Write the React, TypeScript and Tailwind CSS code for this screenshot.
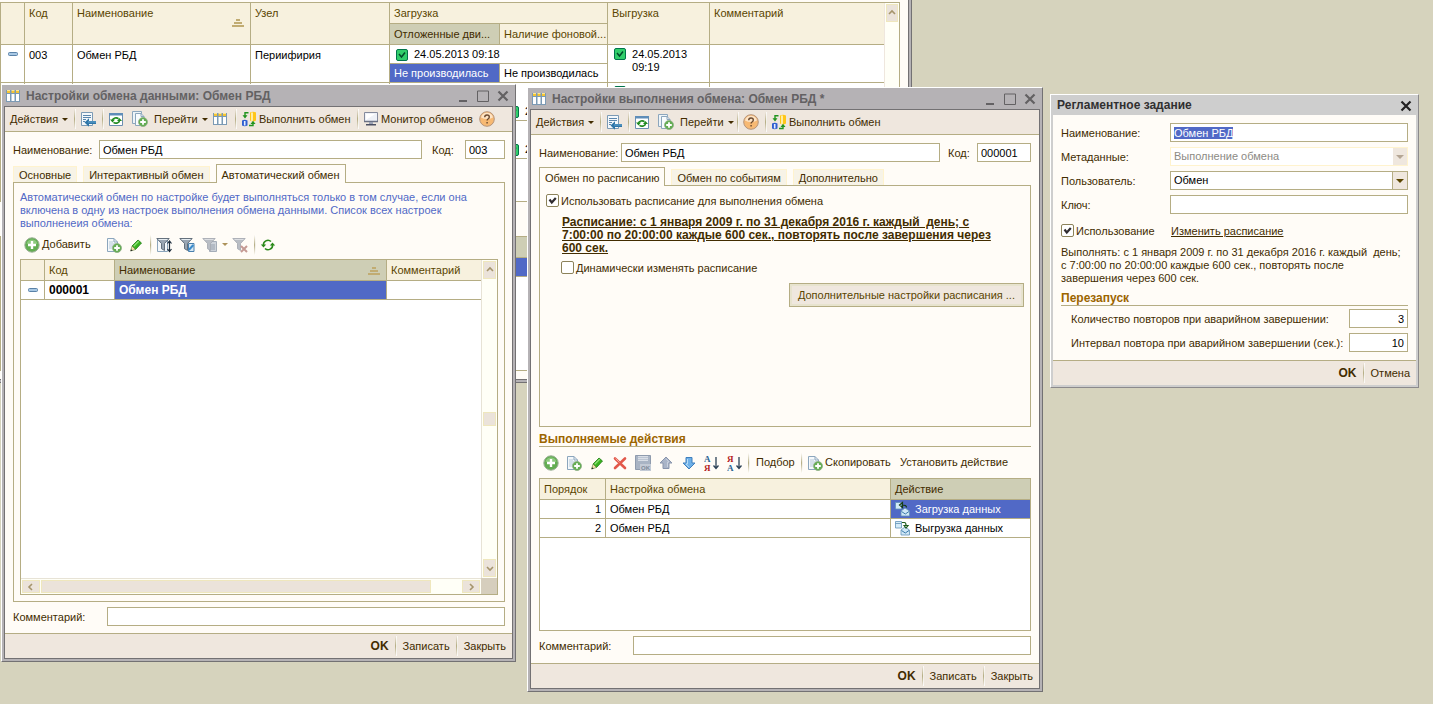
import { useEffect, useRef, type ReactNode } from 'react';
import clsx from 'clsx';

type IconProps = { className?: string };

/* ---------- icons ---------- */

function TableIcon({ className }: IconProps) {
  return (
    <svg viewBox="0 0 14 14" className={clsx('h-3.5 w-3.5 shrink-0', className)}>
      <path d="M0 1h14v12H0z" fill="#7b9ab5" />
      <path d="M1 5h3v7H1zM5.500 5h3v7h-3zM10 5h3v7h-3z" fill="#fff" />
      <path d="M1 2h3v2H1zM5.500 2h3v2h-3zM10 2h3v2h-3z" fill="#f7c531" />
      <path d="M1 1h3v1H1zM5.500 1h3v1h-3zM10 1h3v1h-3z" fill="#ffe794" />
    </svg>
  );
}

function FormArrowIcon() {
  return (
    <svg viewBox="0 0 16 16" className="h-4 w-4 shrink-0">
      <path d="M1.500 1.500h11v13h-11z" fill="#f4f8fb" stroke="#7b9ab5" />
      <path d="M3 4.500h8M3 6.500h8M3 8.500h3M3 10.500h2" stroke="#5a86ad" />
      <path d="M4.500 11.500l4.500-4.200v2.700H16v3H9v2.700z" fill="#2f76a8" />
      <path d="M8 11h8" stroke="#73b2da" strokeWidth=".8" />
    </svg>
  );
}

function ReloadIcon() {
  return (
    <svg viewBox="0 0 16 16" className="h-4 w-4 shrink-0">
      <path d="M1.500 2.500h13v12h-13z" fill="#fff" stroke="#6b8eb0" />
      <path d="M1 2h14v2.500H1z" fill="#5f8db8" />
      <path d="M4.500 9a3.500 2.600 0 0 1 6-1.300M11.500 9.500a3.500 2.600 0 0 1-6 1.800" fill="none" stroke="#1f8a1f" strokeWidth="1.600" />
      <path d="M2 8.500h5L4.500 11.500zM9 10h5l-2.500-3z" fill="#1f8a1f" />
    </svg>
  );
}

function PlusBadge() {
  return (
    <>
      <circle cx="11" cy="11" r="4.500" fill="#63ad52" stroke="#8fae86" strokeWidth=".8" />
      <path d="M11 8.200v5.600M8.200 11h5.600" stroke="#fff" strokeWidth="1.800" />
    </>
  );
}

function CopyIcon() {
  return (
    <svg viewBox="0 0 16 16" className="h-4 w-4 shrink-0">
      <path d="M.5.500h9v12h-9z" fill="#eef4f8" stroke="#8ca6bd" />
      <path d="M3.500 2.500H9l3 3v9H3.500z" fill="#f8fbfd" stroke="#8ca6bd" />
      <path d="M9 2.500v3h3" fill="none" stroke="#8ca6bd" />
      <PlusBadge />
    </svg>
  );
}

function PageAddIcon() {
  return (
    <svg viewBox="0 0 16 16" className="h-4 w-4 shrink-0">
      <path d="M1.500 1.500H8l3.500 3.500v9.500h-10z" fill="#f4f8fb" stroke="#8ca6bd" />
      <path d="M8 1.500V5h3.500" fill="none" stroke="#8ca6bd" />
      <path d="M3 5h4M3 7h6M3 9h4M3 11h3" stroke="#b5c8d8" />
      <PlusBadge />
    </svg>
  );
}

function ExchangeIcon() {
  return (
    <svg viewBox="0 0 16 16" className="h-4 w-4 shrink-0">
      <path d="M9 1.500q3-1.500 6 0v8q-3 1.800-6 0z" fill="#ffc618" />
      <path d="M11 1.500v8.500" stroke="#fff7c6" strokeWidth="1.600" />
      <path d="M1 9.500q2.700-1.500 5.500 0v5q-2.800 1.500-5.500 0z" fill="#2f5fd0" />
      <path d="M3.700 10v4.500" stroke="#e4edff" strokeWidth="1.600" />
      <path d="M7.500 1.700H4V5M8 14.500h4V12" fill="none" stroke="#21941f" strokeWidth="1.400" />
      <path d="M1.500 4.200h5L4 7.500zM9.500 13h5L12 9.800z" fill="#21941f" />
    </svg>
  );
}

function MonitorIcon() {
  return (
    <svg viewBox="0 0 16 16" className="h-4 w-4 shrink-0">
      <path d="M1.500 1.500h13v9h-13z" fill="#eef1f7" stroke="#848a9c" />
      <path d="M3 9l9-6H3z" fill="#fff" />
      <path d="M1 10.500h14" stroke="#6b7184" strokeWidth="1.500" />
      <path d="M6 11h4v2H6z" fill="#9ca2b5" />
      <path d="M3 13h10v1.500H3z" fill="#4a4f63" />
    </svg>
  );
}

function HelpIcon() {
  return (
    <svg viewBox="0 0 16 16" className="h-4 w-4 shrink-0">
      <circle cx="8" cy="8" r="7.300" fill="#f7b973" stroke="#b5947b" />
      <path d="M2 6.500a6.200 6.200 0 0 1 12 0q-6 3-12 0" fill="#fde3c4" />
      <path d="M5.700 6.200Q5.700 4 8 4t2.300 2q0 1.200-1.300 2-.9.600-.9 1.500M8.100 11v1.500" fill="none" stroke="#6b4a31" strokeWidth="1.400" />
    </svg>
  );
}

function AddIcon() {
  return (
    <svg viewBox="0 0 16 16" className="h-4 w-4 shrink-0">
      <circle cx="8" cy="8" r="7.200" fill="#63ad52" stroke="#9aaf95" />
      <path d="M2.500 6.500a5.800 5.800 0 0 1 11 0q-5 2.500-11 0" fill="#8cc97d" />
      <path d="M8 4v8M4 8h8" stroke="#fff" strokeWidth="2.400" />
    </svg>
  );
}

function PencilIcon() {
  return (
    <svg viewBox="0 0 16 16" className="h-4 w-4 shrink-0">
      <path d="M4 9L10 3l3.500 3L7.500 12.500z" fill="#39b21f" stroke="#1c7a10" strokeWidth=".8" />
      <path d="M4 9l3.500 3.500L2.700 14z" fill="#f7e3ad" stroke="#5a7a3c" strokeWidth=".6" />
      <path d="M2.500 14.200l.5-2L4.700 13.600z" fill="#222" />
      <path d="M5.700 9.200l5-4.900" stroke="#8fe27a" strokeWidth="1.200" />
    </svg>
  );
}

function FunnelIcon({ kind }: { kind: 'sort' | 'value' | 'list' | 'clear' }) {
  const dim = kind === 'list' || kind === 'clear';
  return (
    <svg viewBox="0 0 16 16" className="h-4 w-4 shrink-0">
      {kind === 'sort' && <path d="M1.500 2.500h10v12h-10z" fill="#f4f8fb" stroke="#8ca6bd" />}
      {kind === 'list' && (
        <>
          <path d="M7.500 4.500h7v10h-7z" fill="#ced3da" stroke="#a5adb8" />
          <path d="M9 8h4M9 10h4M9 12h4" stroke="#98a1ae" />
        </>
      )}
      <path d="M.8 1.500h12.400L8.500 6.500v7L5.500 11.700V6.500z" fill={dim ? '#b9bdc4' : '#9aa6b3'} stroke={dim ? '#a2a6ae' : '#4a5866'} strokeWidth=".8" />
      <path d="M2.500 2.500h9" stroke={dim ? '#dcdee2' : '#e6edf2'} />
      {kind === 'sort' && <path d="M13.500 4v10M11.500 6.500l2-2.500 2 2.500M11.500 12l2 2.500 2-2.500" fill="none" stroke="#1c2c3c" strokeWidth="1.200" />}
      {kind === 'value' && (
        <>
          <path d="M9.500 6.500h5.500v8H9.500z" fill="#d8e9f5" stroke="#4a80ad" />
          <path d="M9.800 13l4.500-5" stroke="#3a8acb" strokeWidth="2" />
        </>
      )}
      {kind === 'clear' && <path d="M9 9l6 6M15 9l-6 6" stroke="#c59a94" strokeWidth="2" />}
    </svg>
  );
}

function RefreshIcon() {
  return (
    <svg viewBox="0 0 16 16" className="h-4 w-4 shrink-0">
      <path d="M3.500 8.500a4.500 4.500 0 0 1 7.500-4M12.500 7.500a4.500 4.500 0 0 1-7.500 4" fill="none" stroke="#2a8a1a" strokeWidth="1.600" />
      <path d="M.8 7.500h5.400L3.500 10.500zM9.800 8.500h5.400l-2.700-3z" fill="#2a8a1a" />
    </svg>
  );
}

function DeleteIcon() {
  return (
    <svg viewBox="0 0 16 16" className="h-4 w-4 shrink-0">
      <path d="M3 3.500l10 9.500M13 3.500L3 13" stroke="#e2584a" strokeWidth="2.600" strokeLinecap="round" />
      <path d="M3.500 3.500l4 4" stroke="#f6a49a" />
    </svg>
  );
}

function SaveIcon() {
  return (
    <svg viewBox="0 0 16 16" className="h-4 w-4 shrink-0">
      <path d="M.5.500h15v14H.5z" fill="#a9b4c4" stroke="#8f9bad" />
      <path d="M3 1h10v5H3z" fill="#d9dee6" />
      <path d="M3 2.500h10M3 4.500h10" stroke="#bcc5d2" />
      <path d="M5 9h11v7H5z" fill="#c3cad5" />
      <text x="6" y="15" fontSize="6" fontWeight="bold" fontFamily="Liberation Sans, sans-serif" fill="#7f8a9b">OK</text>
    </svg>
  );
}

function MoveIcon({ down }: { down?: boolean }) {
  return (
    <svg viewBox="0 0 16 16" className={clsx('h-4 w-4 shrink-0', down && 'rotate-180')}>
      <path d="M8 2l6 6h-3v5.500H5V8H2z" fill={down ? '#6fb0e8' : '#a9b4c8'} stroke={down ? '#3f7fbd' : '#8995ad'} strokeLinejoin="round" />
      <path d="M8 3.800L11 7H9.500v5" fill="none" stroke={down ? '#b5dcf8' : '#c8d0de'} />
    </svg>
  );
}

function OrderIcon({ desc }: { desc?: boolean }) {
  return (
    <svg viewBox="0 0 16 16" className="h-4 w-4 shrink-0">
      <text x="0" y="7" fontSize="9" fontWeight="bold" fontFamily="Liberation Serif, serif" fill={desc ? '#b51f1f' : '#2a6594'}>{desc ? 'Я' : 'А'}</text>
      <text x="0" y="15.500" fontSize="9" fontWeight="bold" fontFamily="Liberation Serif, serif" fill={desc ? '#2a6594' : '#b51f1f'}>{desc ? 'А' : 'Я'}</text>
      <path d="M12 2v11M9.500 10.500l2.500 3 2.500-3" fill="none" stroke="#2c4257" strokeWidth="1.300" />
    </svg>
  );
}

function TransferIcon({ out }: { out?: boolean }) {
  return (
    <svg viewBox="0 0 16 16" className="h-4 w-4 shrink-0">
      <path d="M.5 1.500h6v6.500h-6z" fill="#d4ebf8" stroke="#5f92b8" strokeWidth=".8" />
      {out && <path d="M.5 3.500h6" stroke="#5f92b8" strokeWidth=".8" />}
      <path d="M6 10l4-3 4.500 3v5H6z" fill="#cfe7f6" stroke="#5f92b8" strokeWidth=".8" />
      <path d="M6.500 10.500l3.800 2.500 3.700-2.500" fill="none" stroke="#3b7bab" />
      {out ? (
        <path d="M7 2.500h2.500q1.500 0 1.500 3M9 5.500l2 2.500 2-2.500z" fill="none" stroke="#1d5c1d" strokeWidth="1.200" />
      ) : (
        <path d="M11.500 6.500Q11.500 4 7 4M7.500 1.500L4.500 4l3 2.500z" fill="none" stroke="#163c16" strokeWidth="1.200" />
      )}
    </svg>
  );
}

function OkBox({ className }: IconProps) {
  return (
    <svg viewBox="0 0 12 12" className={clsx('h-3 w-3 shrink-0', className)}>
      <rect x=".5" y=".5" width="11" height="11" rx="1.500" fill="#31ce6b" stroke="#00734a" />
      <path d="M3 5l2.500 3L9 3.500" fill="none" stroke="#004a29" strokeWidth="1.500" />
    </svg>
  );
}

function RowMark() {
  return (
    <svg viewBox="0 0 10 4" className="mx-auto h-1 w-2.5">
      <rect x=".5" y=".5" width="9" height="3" rx="1" fill="#a8c8e4" stroke="#5a82a8" />
    </svg>
  );
}

function SortMark() {
  return (
    <svg viewBox="0 0 12 8" className="h-2 w-3 shrink-0">
      <path d="M4 0h4v2H4zM2 3h8v2H2zM0 6h12v2H0z" fill="#c1ac72" />
    </svg>
  );
}

function Caret({ wide }: { wide?: boolean }) {
  return (
    <svg viewBox="0 0 6 3" className={clsx('shrink-0', wide ? 'h-1 w-2' : 'h-[3px] w-1.5')}>
      <path d="M0 0h6L3 3z" fill="currentColor" />
    </svg>
  );
}

function CrossIcon({ color }: { color: string }) {
  return (
    <svg viewBox="0 0 12 12">
      <path d="M1.500 1.500l9 9M10.500 1.500l-9 9" stroke={color} strokeWidth="2.200" />
    </svg>
  );
}

/* ---------- shared controls ---------- */

function Sep() {
  return <span className="h-5 w-0.5 shrink-0 border-r border-white/80 bg-gradient-to-b from-transparent via-[#b5ad84] to-transparent" />;
}

function ToolButton({ icon, children, menu, label, className }: { icon?: ReactNode; children?: ReactNode; menu?: boolean; label?: string; className?: string }) {
  return (
    <button type="button" aria-label={label} className={clsx('flex h-5 shrink-0 items-center gap-0.5 whitespace-nowrap', className)}>
      {icon}
      {children && <span>{children}</span>}
      {menu && <span className="pl-0.5"><Caret /></span>}
    </button>
  );
}

function TitleBar({ title }: { title: string }) {
  return (
    <div className="flex h-[21px] shrink-0 items-center gap-1.5 pl-0.5 pr-1 pt-px text-[12px] font-bold text-[#636163]">
      <TableIcon />
      <h2 className="flex-1 whitespace-nowrap">{title}</h2>
      <div className="flex items-center gap-2">
        <button type="button" aria-label="Свернуть" className="h-3 w-3">
          <svg viewBox="0 0 12 12"><path d="M2 10h8v2H2z" fill="#636163" /></svg>
        </button>
        <button type="button" aria-label="Развернуть" className="h-3 w-3">
          <svg viewBox="0 0 12 12"><path d="M.5 1h11v10.500H.5z" fill="none" stroke="#636163" /></svg>
        </button>
        <button type="button" aria-label="Закрыть" className="h-3 w-3">
          <CrossIcon color="#636163" />
        </button>
      </div>
    </div>
  );
}

function FooterBar({ actions }: { actions: string[] }) {
  return (
    <footer className="flex h-[25px] shrink-0 items-center justify-end gap-1.5 border-t border-[#b5ad84] bg-[#efe7de] px-1.5">
      {actions.map((a, i) => (
        <div key={a} className="flex items-center gap-1.5">
          {i > 0 && <Sep />}
          <button type="button" className={clsx(i === 0 && 'text-[12px] font-bold')}>{a}</button>
        </div>
      ))}
    </footer>
  );
}

const field = 'h-[19px] border border-[#b5ad84] bg-white px-[3px] text-black outline-none';
const caption = 'whitespace-nowrap pt-0.5';

function Tabs({ items, active }: { items: string[]; active: number }) {
  return (
    <div role="tablist" className="flex h-[18px] shrink-0 items-end gap-1.5">
      {items.map((t, i) => (
        <button
          key={t}
          type="button"
          role="tab"
          aria-selected={i === active}
          className={clsx(
            'whitespace-nowrap border-x border-t px-[5px]',
            i === active ? 'relative -mb-px h-[19px] border-[#b5ad84] bg-[#fffcf7] pt-0.5' : 'h-4 border-[#fff3ce] bg-[#f7f3e7] pt-px',
          )}
        >
          {t}
        </button>
      ))}
    </div>
  );
}

function CheckBox({ id, label, checked }: { id: string; label: string; checked?: boolean }) {
  return (
    <div className="flex items-center gap-0.5">
      <span className="relative flex">
        <input id={id} type="checkbox" defaultChecked={checked} className="peer h-[13px] w-[13px] appearance-none rounded-[2px] border border-[#8c825a] bg-white" />
        <svg viewBox="0 0 13 13" className="pointer-events-none absolute inset-0 hidden peer-checked:block">
          <path d="M3.500 5.500L5.800 8.500 9.800 4" fill="none" stroke="#302c30" strokeWidth="2.200" />
        </svg>
      </span>
      <label htmlFor={id} className={caption}>{label}</label>
    </div>
  );
}

const arrows = {
  up: 'M2 6l3-3 3 3',
  down: 'M2 4l3 3 3-3',
  left: 'M6 2L3 5l3 3',
  right: 'M4 2l3 3-3 3',
};

function ScrollButton({ dir, className }: { dir: keyof typeof arrows; className?: string }) {
  return (
    <button type="button" aria-label={dir} className={clsx('flex shrink-0 items-center justify-center border border-[#efe7bd] bg-[#ebe3da]', className)}>
      <svg viewBox="0 0 10 10" className="h-2.5 w-2.5">
        <path d={arrows[dir]} fill="none" stroke="#a5946b" strokeWidth="1.600" />
      </svg>
    </button>
  );
}

/* ---------- windows ---------- */

const thBase = 'border-b border-[#b5ad84] px-1 pb-[3px] pt-1 text-left align-top font-normal leading-[13px] whitespace-nowrap';
const th = clsx(thBase, 'border-r bg-[#f7f1de] text-[#5a4500]');
const thLast = clsx(thBase, 'bg-[#f7f1de] text-[#5a4500]');
const thActive = clsx(thBase, 'border-r bg-[#ceceb5] text-[#422c00]');
const thActiveLast = clsx(thBase, 'bg-[#ceceb5] text-[#422c00]');

const tdBase = 'border-b border-[#b5ad84] px-1 leading-[13px] whitespace-nowrap';
const td = clsx(tdBase, 'border-r align-top text-black');
const tdLast = clsx(tdBase, 'align-top text-black');
const tdActive = clsx(tdBase, 'border-r bg-[#5169c6] align-top text-white');
const tdActiveLast = clsx(tdBase, 'bg-[#5169c6] align-top text-white');

function JournalWindow() {
  return (
    <section className="absolute left-0 top-0 flex h-[383px] w-[912px] flex-col border-b border-r border-[#737173] bg-[#b5b2b5] pb-0.5 pr-0.5">
      <div className="flex flex-1 flex-col border-b border-r border-[#737173] bg-[#fffcf7] pb-2 pr-2 pt-0.5">
        <div className="flex h-[200px] shrink-0 border border-[#b5ad84] bg-white">
          <table className="w-[883px] table-fixed border-separate border-spacing-0 self-start">
            <colgroup>
              <col className="w-[24px]" />
              <col className="w-[48px]" />
              <col className="w-[178px]" />
              <col className="w-[139px]" />
              <col className="w-[110px]" />
              <col className="w-[108px]" />
              <col className="w-[102px]" />
              <col />
            </colgroup>
            <thead>
              <tr className="h-[21px]">
                <th rowSpan={2} className={th}></th>
                <th rowSpan={2} className={th}>Код</th>
                <th rowSpan={2} className={th}>
                  <span className="flex justify-between pr-0.5">
                    Наименование
                    <span className="pt-3"><SortMark /></span>
                  </span>
                </th>
                <th rowSpan={2} className={th}>Узел</th>
                <th colSpan={2} className={th}>Загрузка</th>
                <th rowSpan={2} className={th}>Выгрузка</th>
                <th rowSpan={2} className={thLast}>Комментарий</th>
              </tr>
              <tr className="h-[21px]">
                <th className={thActive}>Отложенные дви...</th>
                <th className={th}>Наличие фоновой...</th>
              </tr>
            </thead>
            <tbody>
              <tr className="h-[19px]">
                <td rowSpan={2} className={clsx(td, 'pt-[7px]')}><RowMark /></td>
                <td rowSpan={2} className={clsx(td, 'pt-1')}>003</td>
                <td rowSpan={2} className={clsx(td, 'pt-1')}>Обмен РБД</td>
                <td rowSpan={2} className={clsx(td, 'pt-1')}>Периифирия</td>
                <td colSpan={2} className={td}>
                  <span className="flex items-center gap-1.5 pl-0.5 pt-[3px]"><OkBox />24.05.2013 09:18</span>
                </td>
                <td rowSpan={2} className={td}>
                  <span className="flex gap-1.5 pl-0.5 pt-[3px]"><OkBox /><span>24.05.2013<br />09:19</span></span>
                </td>
                <td rowSpan={2} className={tdLast}></td>
              </tr>
              <tr className="h-[19px]">
                <td className={clsx(tdActive, 'pt-[3px]')}>Не производилась</td>
                <td className={clsx(td, 'pt-[3px]')}>Не производилась</td>
              </tr>
              {[0, 1].map((n) => (
                <tr key={n} className="h-[38px]">
                  <td className={td}></td>
                  <td className={td}></td>
                  <td className={td}></td>
                  <td className={td}></td>
                  <td className={tdLast}></td>
                  <td className={clsx(tdBase, 'border-r pb-0.5 align-bottom text-black')}>
                    <span className="flex items-center gap-1.5 pl-[3px]"><OkBox />24</span>
                  </td>
                  <td className={clsx(td, 'pl-1.5 pt-[3px]')}><OkBox /></td>
                  <td className={tdLast}></td>
                </tr>
              ))}
            </tbody>
          </table>
          <div className="flex flex-1 flex-col border-l border-[#efe7de] bg-[#fffff7] p-px">
            <ScrollButton dir="up" className="h-[18px] w-full" />
          </div>
        </div>
        {/* message list under the journal */}
        <div className="mt-[34px] flex flex-1 flex-col border border-[#b5ad84] bg-white">
          <div className="h-[21px] border-b border-[#b5ad84] bg-[#ceceb5]" />
          <div className="h-[19px] border-b border-[#b5ad84] bg-[#5169c6]" />
        </div>
      </div>
    </section>
  );
}

function SettingsWindow() {
  return (
    <section className="absolute left-[1px] top-[84px] flex h-[578px] w-[515px] flex-col border border-b-[#737173] border-l-white border-r-[#737173] border-t-white bg-[#b5b2b5] px-0.5 pb-0.5">
      <TitleBar title="Настройки обмена данными: Обмен РБД" />
      <div className="flex flex-1 flex-col border border-[#737173] bg-[#fffcf7]">
        <div className="flex h-[25px] shrink-0 items-center border-b border-[#b5ad84] bg-[#efe7de] pl-[5px]">
          <ToolButton menu className="w-[64px]">Действия</ToolButton>
          <Sep />
          <ToolButton label="Список" icon={<FormArrowIcon />} className="ml-1 w-[22px]" />
          <Sep />
          <ToolButton label="Перечитать" icon={<ReloadIcon />} className="ml-1 w-[24px]" />
          <ToolButton label="Скопировать" icon={<CopyIcon />} className="w-[22px]" />
          <ToolButton menu className="w-[59px]">Перейти</ToolButton>
          <ToolButton label="Таблица" icon={<TableIcon />} className="w-[22px]" />
          <Sep />
          <ToolButton icon={<ExchangeIcon />} className="ml-1 w-[116px]">Выполнить обмен</ToolButton>
          <Sep />
          <ToolButton icon={<MonitorIcon />} className="ml-1 w-[116px]">Монитор обменов</ToolButton>
          <ToolButton label="Справка" icon={<HelpIcon />} />
        </div>
        <div className="flex flex-1 flex-col pb-[7px] pl-2 pr-[7px] pt-2">
          <div className="flex items-center">
            <label htmlFor="set-name" className={clsx(caption, 'w-[86px]')}>Наименование:</label>
            <input id="set-name" defaultValue="Обмен РБД" className={clsx(field, 'min-w-0 flex-1')} />
            <label htmlFor="set-code" className={clsx(caption, 'w-[43px] pl-2.5')}>Код:</label>
            <input id="set-code" defaultValue="003" className={clsx(field, 'w-[40px]')} />
          </div>
          <div className="h-[5px]" />
          <Tabs items={['Основные', 'Интерактивный обмен', 'Автоматический обмен']} active={2} />
          <div className="flex flex-1 flex-col border border-[#b5ad84] px-1.5 pb-1.5 pt-2">
            <p className="whitespace-nowrap leading-[13px] text-[#5169c6]">
              Автоматический обмен по настройке будет выполняться только в том случае, если она<br />
              включена в одну из настроек выполнения обмена данными. Список всех настроек<br />
              выполненеия обмена:
            </p>
            <div className="flex h-[29px] items-center pl-1">
              <ToolButton icon={<AddIcon />} className="w-[82px]">Добавить</ToolButton>
              <ToolButton label="Добавить копированием" icon={<PageAddIcon />} className="w-[22px]" />
              <ToolButton label="Изменить" icon={<PencilIcon />} className="w-[22px]" />
              <Sep />
              <ToolButton label="Отбор и сортировка" icon={<FunnelIcon kind="sort" />} className="ml-1 w-[23px]" />
              <ToolButton label="Отбор по значению" icon={<FunnelIcon kind="value" />} className="w-[23px]" />
              <ToolButton label="История отборов" menu icon={<FunnelIcon kind="list" />} className="w-[30px] text-[#ad925a]" />
              <ToolButton label="Отключить отбор" icon={<FunnelIcon kind="clear" />} className="w-[22px]" />
              <Sep />
              <ToolButton label="Обновить" icon={<RefreshIcon />} className="ml-1" />
            </div>
            <div className="flex flex-1 flex-col border border-[#b5ad84] bg-white">
              <div className="flex flex-1">
                <table className="flex-1 table-fixed border-separate border-spacing-0 self-start">
                  <colgroup>
                    <col className="w-[24px]" />
                    <col className="w-[70px]" />
                    <col />
                    <col className="w-[94px]" />
                  </colgroup>
                  <thead>
                    <tr className="h-[21px]">
                      <th className={th}></th>
                      <th className={th}>Код</th>
                      <th className={thActive}>
                        <span className="flex items-center justify-between pr-0.5">Наименование<SortMark /></span>
                      </th>
                      <th className={thLast}>Комментарий</th>
                    </tr>
                  </thead>
                  <tbody>
                    <tr className="h-[19px] text-[12px] font-bold">
                      <td className={clsx(td, 'pt-[7px]')}><RowMark /></td>
                      <td className={clsx(td, 'pt-[3px]')}>000001</td>
                      <td className={clsx(tdActive, 'pt-[3px]')}>Обмен РБД</td>
                      <td className={tdLast}></td>
                    </tr>
                  </tbody>
                </table>
                <div className="flex w-4 shrink-0 flex-col border-l border-[#e7e3d6] bg-[#fffff7] p-px">
                  <ScrollButton dir="up" className="h-[18px]" />
                  <div className="flex-[133]" />
                  <div className="h-[14px] border border-[#efe7bd] bg-[#ebe3da]" />
                  <div className="flex-[133]" />
                  <ScrollButton dir="down" className="h-[18px]" />
                </div>
              </div>
              <div className="flex h-4 shrink-0">
                <div className="flex flex-1 border-t border-[#e7e3d6] bg-[#fffff7] p-px">
                  <ScrollButton dir="left" className="w-[18px]" />
                  <div className="ml-px flex-[390] border border-[#efe7bd] bg-[#ebe3da]" />
                  <div className="flex-[31]" />
                  <ScrollButton dir="right" className="w-[18px]" />
                </div>
                <div className="w-4 bg-[#d6cebd]" />
              </div>
            </div>
          </div>
          <div className="mt-[5px] flex items-center">
            <label htmlFor="set-comment" className={clsx(caption, 'w-[94px]')}>Комментарий:</label>
            <input id="set-comment" className={clsx(field, 'min-w-0 flex-1')} />
          </div>
        </div>
        <FooterBar actions={['OK', 'Записать', 'Закрыть']} />
      </div>
    </section>
  );
}

function ExecutionWindow() {
  return (
    <section className="absolute left-[527px] top-[87px] flex h-[605px] w-[516px] flex-col border border-b-[#737173] border-l-white border-r-[#737173] border-t-white bg-[#b5b2b5] px-0.5 pb-0.5">
      <TitleBar title="Настройки выполнения обмена: Обмен РБД *" />
      <div className="flex flex-1 flex-col border border-[#737173] bg-[#fffcf7]">
        <div className="flex h-[25px] shrink-0 items-center border-b border-[#b5ad84] bg-[#efe7de] pl-[5px]">
          <ToolButton menu className="w-[64px]">Действия</ToolButton>
          <Sep />
          <ToolButton label="Список" icon={<FormArrowIcon />} className="ml-1 w-[22px]" />
          <Sep />
          <ToolButton label="Перечитать" icon={<ReloadIcon />} className="ml-1 w-[24px]" />
          <ToolButton label="Скопировать" icon={<CopyIcon />} className="w-[22px]" />
          <ToolButton menu className="w-[57px]">Перейти</ToolButton>
          <Sep />
          <ToolButton label="Справка" icon={<HelpIcon />} className="ml-1 w-[22px]" />
          <Sep />
          <ToolButton icon={<ExchangeIcon />} className="ml-1">Выполнить обмен</ToolButton>
        </div>
        <div className="flex flex-1 flex-col px-2 pb-2 pt-2">
          <div className="flex items-center">
            <label htmlFor="ex-name" className={clsx(caption, 'w-[82px]')}>Наименование:</label>
            <input id="ex-name" defaultValue="Обмен РБД" className={clsx(field, 'min-w-0 flex-1')} />
            <label htmlFor="ex-code" className={clsx(caption, 'w-[37px] pl-2')}>Код:</label>
            <input id="ex-code" defaultValue="000001" className={clsx(field, 'w-[54px]')} />
          </div>
          <div className="h-[5px]" />
          <Tabs items={['Обмен по расписанию', 'Обмен по событиям', 'Дополнительно']} active={0} />
          <div className="flex h-[242px] shrink-0 flex-col border border-[#b5ad84] px-1.5 pt-[7px]">
            <CheckBox id="use-schedule" label="Использовать расписание для выполнения обмена" checked />
            <a href="#schedule" className="ml-4 mt-2 whitespace-pre text-[12px] font-bold leading-[13px] underline">
              {'Расписание: с 1 января 2009 г. по 31 декабря 2016 г. каждый  день; с\n7:00:00 по 20:00:00 каждые 600 сек., повторять после завершения через\n600 сек.'}
            </a>
            <div className="ml-[15px] mt-[5px]">
              <CheckBox id="dynamic" label="Динамически изменять расписание" />
            </div>
            <button type="button" className="mt-2 h-6 self-end whitespace-nowrap border border-[#b5ad84] bg-[#efe7de] px-2 text-[#5a4500] shadow-[inset_0_0_0_2px_#e7e3ce]">
              Дополнительные настройки расписания ...
            </button>
          </div>
          <h3 className="mt-[5px] h-[15px] shrink-0 border-b border-[#b5ad84] text-[12px] font-bold leading-[15px] text-[#9c6500]">Выполняемые действия</h3>
          <div className="flex h-[31px] shrink-0 items-center pl-1">
            <ToolButton label="Добавить" icon={<AddIcon />} className="w-[23px]" />
            <ToolButton label="Добавить копированием" icon={<PageAddIcon />} className="w-[23px]" />
            <ToolButton label="Изменить" icon={<PencilIcon />} className="w-[23px]" />
            <ToolButton label="Удалить" icon={<DeleteIcon />} className="w-[23px]" />
            <ToolButton label="Закончить редактирование" icon={<SaveIcon />} className="w-[23px]" />
            <ToolButton label="Переместить вверх" icon={<MoveIcon />} className="w-[23px]" />
            <ToolButton label="Переместить вниз" icon={<MoveIcon down />} className="w-[23px]" />
            <ToolButton label="Сортировать по возрастанию" icon={<OrderIcon />} className="w-[23px]" />
            <ToolButton label="Сортировать по убыванию" icon={<OrderIcon desc />} className="w-[21px]" />
            <Sep />
            <ToolButton className="ml-1.5 w-[45px]">Подбор</ToolButton>
            <Sep />
            <ToolButton icon={<PageAddIcon />} className="ml-1 w-[93px]">Скопировать</ToolButton>
            <ToolButton>Установить действие</ToolButton>
          </div>
          <div className="flex-1 border border-[#b5ad84] bg-white">
            <table className="w-full table-fixed border-separate border-spacing-0">
              <colgroup>
                <col className="w-[66px]" />
                <col />
                <col className="w-[139px]" />
              </colgroup>
              <thead>
                <tr className="h-[21px]">
                  <th className={th}>Порядок</th>
                  <th className={th}>Настройка обмена</th>
                  <th className={thActiveLast}>Действие</th>
                </tr>
              </thead>
              <tbody>
                <tr className="h-[19px]">
                  <td className={clsx(td, 'pt-[3px] text-right')}>1</td>
                  <td className={clsx(td, 'pt-[3px]')}>Обмен РБД</td>
                  <td className={tdActiveLast}>
                    <span className="flex h-[18px] items-center gap-1"><TransferIcon />Загрузка данных</span>
                  </td>
                </tr>
                <tr className="h-[19px]">
                  <td className={clsx(td, 'pt-[3px] text-right')}>2</td>
                  <td className={clsx(td, 'pt-[3px]')}>Обмен РБД</td>
                  <td className={tdLast}>
                    <span className="flex h-[18px] items-center gap-1"><TransferIcon out />Выгрузка данных</span>
                  </td>
                </tr>
              </tbody>
            </table>
          </div>
          <div className="mt-[5px] flex items-center">
            <label htmlFor="ex-comment" className={clsx(caption, 'w-[94px]')}>Комментарий:</label>
            <input id="ex-comment" className={clsx(field, 'min-w-0 flex-1')} />
          </div>
        </div>
        <FooterBar actions={['OK', 'Записать', 'Закрыть']} />
      </div>
    </section>
  );
}

function JobWindow() {
  const nameRef = useRef<HTMLInputElement>(null);

  useEffect(() => {
    nameRef.current?.focus();
    nameRef.current?.select();
  }, []);

  return (
    <section className="absolute left-[1050px] top-[94px] flex h-[294px] w-[369px] flex-col border border-b-[#8c8a8c] border-l-white border-r-[#8c8a8c] border-t-white bg-[#cecece] px-0.5 pb-0.5">
      <div className="flex h-5 shrink-0 items-center px-1 pt-px text-[12px] font-bold text-[#313031]">
        <h2 className="flex-1">Регламентное задание</h2>
        <button type="button" aria-label="Закрыть" className="h-3 w-3"><CrossIcon color="#212021" /></button>
      </div>
      <div className="flex flex-1 flex-col bg-[#fffcf7] px-2 pt-2">
        <div className="grid grid-cols-[109px_1fr] items-center gap-y-[5px]">
          <label htmlFor="job-name" className={caption}>Наименование:</label>
          <input ref={nameRef} id="job-name" defaultValue="Обмен РБД" className={clsx(field, 'selection:bg-[#5169c6] selection:text-white')} />
          <label htmlFor="job-meta" className={caption}>Метаданные:</label>
          <div className="relative flex">
            <select id="job-meta" disabled className="h-[19px] w-full appearance-none border border-[#fff3ce] bg-white px-[3px] text-[#8c8a84] opacity-100">
              <option>Выполнение обмена</option>
            </select>
            <span className="pointer-events-none absolute inset-y-px right-px flex w-[14px] items-center justify-center bg-[#efe7de] text-[#b5a694]">
              <Caret wide />
            </span>
          </div>
          <label htmlFor="job-user" className={caption}>Пользователь:</label>
          <div className="relative flex">
            <select id="job-user" className={clsx(field, 'w-full appearance-none')}>
              <option>Обмен</option>
            </select>
            <span className="pointer-events-none absolute inset-y-px right-px flex w-[15px] items-center justify-center border-l border-[#b5ad84] bg-[#efe7de] text-[#5a4500]">
              <Caret wide />
            </span>
          </div>
          <label htmlFor="job-key" className={caption}>Ключ:</label>
          <input id="job-key" className={field} />
        </div>
        <div className="mt-[9px] grid grid-cols-[110px_1fr] items-center">
          <CheckBox id="job-use" label="Использование" checked />
          <a href="#edit-schedule" className="pt-0.5 underline">Изменить расписание</a>
        </div>
        <p className="mt-2 whitespace-pre leading-[13px]">
          {'Выполнять: с 1 января 2009 г. по 31 декабря 2016 г. каждый  день;\nс 7:00:00 по 20:00:00 каждые 600 сек., повторять после\nзавершения через 600 сек.'}
        </p>
        <h3 className="mt-[6px] h-[15px] border-b border-[#b5ad84] text-[12px] font-bold leading-[15px] text-[#9c6500]">Перезапуск</h3>
        <div className="mt-[3px] flex flex-col gap-[5px] pl-2.5">
          <div className="flex items-center justify-between">
            <label htmlFor="job-count" className={caption}>Количество повторов при аварийном завершении:</label>
            <input id="job-count" defaultValue="3" className={clsx(field, 'w-[59px] text-right')} />
          </div>
          <div className="flex items-center justify-between">
            <label htmlFor="job-interval" className={caption}>Интервал повтора при аварийном завершении (сек.):</label>
            <input id="job-interval" defaultValue="10" className={clsx(field, 'w-[59px] text-right')} />
          </div>
        </div>
      </div>
      <FooterBar actions={['OK', 'Отмена']} />
    </section>
  );
}

export default function App() {
  return (
    <main className="relative min-h-screen overflow-hidden bg-[#d6d3bd] font-['Liberation_Sans',Arial,sans-serif] text-[11px] leading-[13px] text-[#422c00]">
      <JournalWindow />
      <SettingsWindow />
      <ExecutionWindow />
      <JobWindow />
    </main>
  );
}
